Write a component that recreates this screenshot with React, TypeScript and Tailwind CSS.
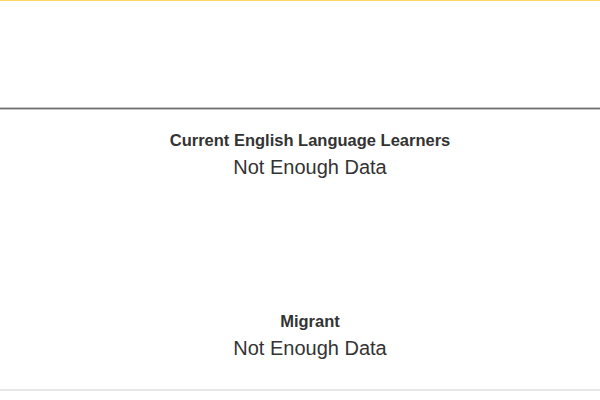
const sections = [
  { title: "Current English Language Learners", value: "Not Enough Data" },
  { title: "Migrant", value: "Not Enough Data" },
];

export default function App() {
  return (
    <div className="h-[400px] w-[600px] overflow-hidden bg-white font-['Liberation_Sans',Arial,sans-serif] text-[#333333]">
      <div className="h-px bg-[#fdd663]" />
      <div className="h-[106px]" />
      <div className="flex h-[3px] items-center bg-[#c4c4c4]">
        <div className="h-px w-full bg-[#6f6f6f]" />
      </div>
      <div className="pl-5">
        {sections.map((s, i) => (
          <div key={s.title} className={i === 0 ? "h-[181px] pt-[18px]" : "h-[98px] pt-[18px]"}>
            <p className="text-center text-[16.5px] font-bold leading-6">{s.title}</p>
            <p className="mt-[1px] text-center text-xl leading-7">{s.value}</p>
          </div>
        ))}
      </div>
      <div className="h-[2px] bg-[#e6e6e6]" />
    </div>
  );
}
